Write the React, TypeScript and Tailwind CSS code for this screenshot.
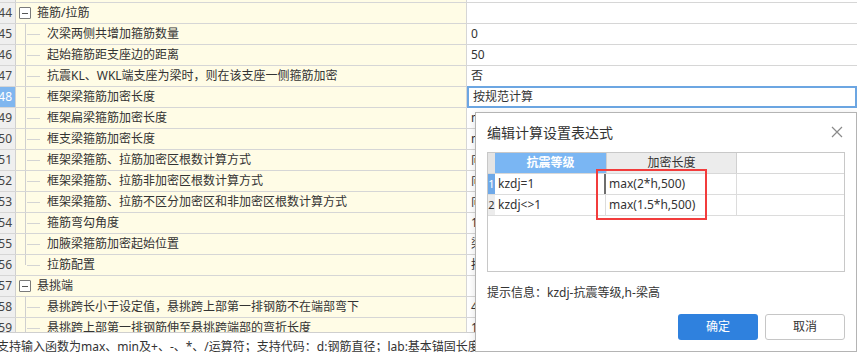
import React from "react";

type Row = {
  n: number;
  kind: "group" | "child";
  name: string;
  value?: string;
  last?: boolean;
  selected?: boolean;
};

const ROWS: Row[] = [
  { n: 43, kind: "child", name: "", value: "", last: true },
  { n: 44, kind: "group", name: "箍筋/拉筋" },
  { n: 45, kind: "child", name: "次梁两侧共增加箍筋数量", value: "0" },
  { n: 46, kind: "child", name: "起始箍筋距支座边的距离", value: "50" },
  { n: 47, kind: "child", name: "抗震KL、WKL端支座为梁时，则在该支座一侧箍筋加密", value: "否" },
  { n: 48, kind: "child", name: "框架梁箍筋加密长度", value: "按规范计算", selected: true },
  { n: 49, kind: "child", name: "框架扁梁箍筋加密长度", value: "max(b+hb,lae,C)" },
  { n: 50, kind: "child", name: "框支梁箍筋加密长度", value: "max(0.2*Ln,1.5*hb)" },
  { n: 51, kind: "child", name: "框架梁箍筋、拉筋加密区根数计算方式", value: "向上取整+1" },
  { n: 52, kind: "child", name: "框架梁箍筋、拉筋非加密区根数计算方式", value: "向上取整-1" },
  { n: 53, kind: "child", name: "框架梁箍筋、拉筋不区分加密区和非加密区根数计算方式", value: "向上取整+1" },
  { n: 54, kind: "child", name: "箍筋弯勾角度", value: "135°" },
  { n: 55, kind: "child", name: "加腋梁箍筋加密起始位置", value: "梁端" },
  { n: 56, kind: "child", name: "拉筋配置", value: "按规范计算", last: true },
  { n: 57, kind: "group", name: "悬挑端" },
  { n: 58, kind: "child", name: "悬挑跨长小于设定值，悬挑跨上部第一排钢筋不在端部弯下", value: "4*h" },
  { n: 59, kind: "child", name: "悬挑跨上部第一排钢筋伸至悬挑跨端部的弯折长度", value: "12*d" },
];

function TreeRow({ row }: { row: Row }) {
  return (
    <div className="flex h-[21px] border-b border-[#d6d6d6]">
      {/* 行号 */}
      <div
        className={
          row.selected
            ? "flex w-[16px] shrink-0 items-center justify-end overflow-hidden border-r border-[#d0d0d0] bg-[#7fb6ef] pr-[3px] text-white"
            : "flex w-[16px] shrink-0 items-center justify-end overflow-hidden border-r border-[#d0d0d0] bg-[#efefef] pr-[3px] text-[#444]"
        }
      >
        {row.n}
      </div>

      {/* 名称 */}
      <div className="relative flex w-[450px] shrink-0 items-center overflow-hidden whitespace-nowrap bg-[#fffce6]">
        {row.kind === "group" ? (
          <>
            <span className="ml-[3px] flex h-[12px] w-[12px] items-center justify-center rounded-[1px] border border-[#7a7a7a] bg-white">
              <span className="h-px w-[6px] bg-[#555]" />
            </span>
            <span className="ml-[6px]">{row.name}</span>
          </>
        ) : (
          <>
            <span
              className={
                row.last
                  ? "absolute left-[9px] top-0 h-[10px] w-px bg-[#cfcfcf]"
                  : "absolute left-[9px] top-0 h-full w-px bg-[#cfcfcf]"
              }
            />
            <span className="absolute left-[11px] top-[10px] h-px w-[13px] bg-[#d4d4d4]" />
            <span className="ml-[31px]">{row.name}</span>
          </>
        )}
      </div>

      {/* 值 */}
      <div className="relative flex flex-1 items-center whitespace-nowrap border-l border-[#d6d6d6] bg-white pl-[4px]">
        {row.selected ? (
          <>
            <span className="absolute inset-x-0 -top-px -bottom-px border-2 border-[#6ca6e2]" />
            <span className="pl-[2px]">{row.value}</span>
          </>
        ) : (
          row.value
        )}
      </div>
    </div>
  );
}

function ExprDialog() {
  return (
    <div className="absolute left-[475px] top-[112px] flex h-[240px] w-[382px] flex-col border border-[#b4b4b4] bg-white px-[11px] shadow-[0_2px_8px_rgba(0,0,0,0.12)]">
      <div className="flex h-[39px] items-center justify-between pb-[1px]">
        <span className="text-[14px] text-[#333]">编辑计算设置表达式</span>
        <svg width="12" height="12" viewBox="0 0 12 12" className="mr-[2px]">
          <path d="M1 1L11 11M11 1L1 11" stroke="#8a8a8a" strokeWidth="1.2" />
        </svg>
      </div>

      {/* 表达式表格 */}
      <div className="relative h-[120px] border border-[#c8c8c8]">
        <div className="flex h-[21px] border-b border-[#d8d8d8]">
          <div className="w-[7px] bg-[#e4e4e4]" />
          <div className="flex w-[111px] items-center justify-center bg-[#7ab6f3] font-bold text-white">
            抗震等级
          </div>
          <div className="flex w-[131px] items-center justify-center border-x border-[#d0d0d0] bg-[#ececec] text-[#333]">
            加密长度
          </div>
        </div>
        <div className="flex h-[21px] border-b border-[#dcdcdc]">
          <div className="flex w-[7px] items-center justify-center overflow-hidden bg-[#6fa9e8] text-[11px] text-white">1</div>
          <div className="flex w-[111px] items-center border-r-2 border-[#6e6e6e] pl-[3px]">kzdj=1</div>
          <div className="flex w-[131px] items-center border-r border-[#dcdcdc] pl-[3px]">max(2*h,500)</div>
        </div>
        <div className="flex h-[21px] border-b border-[#dcdcdc]">
          <div className="flex w-[7px] items-center justify-center overflow-hidden bg-[#ececec] text-[11px] text-[#333]">2</div>
          <div className="flex w-[111px] items-center border-r border-[#dcdcdc] pl-[3px]">kzdj&lt;&gt;1</div>
          <div className="flex w-[131px] items-center border-r border-[#dcdcdc] pl-[3px]">max(1.5*h,500)</div>
        </div>
        {/* 红框标注 */}
        <div className="absolute left-[108px] top-[16px] h-[51px] w-[111px] border-2 border-[#f23c3c]" />
      </div>

      <div className="mt-[11px] leading-[20px] text-[#333]">提示信息：kzdj-抗震等级,h-梁高</div>

      <div className="mt-[11px] flex justify-end gap-[7px]">
        <button className="h-[26px] w-[80px] rounded-[3px] bg-[#2f81de] text-white">确定</button>
        <button className="h-[26px] w-[80px] rounded-[3px] border border-[#c6c6c6] bg-white text-[#333]">
          取消
        </button>
      </div>
    </div>
  );
}

export default function App() {
  return (
    <div className="relative h-[352px] w-[857px] overflow-hidden bg-white font-['Noto_Sans','Noto_Sans_CJK_SC',sans-serif] text-[12px] text-[#333]">
      <div className="h-[332px] overflow-hidden">
        <div className="-mt-[18px]">
          {ROWS.map((r) => (
            <TreeRow key={r.n} row={r} />
          ))}
        </div>
      </div>
      <div className="h-[20px] overflow-hidden whitespace-nowrap border-t border-[#cfcfcf] bg-white pt-[4px] leading-[20px]">
        <span className="-ml-[3px]">
          支持输入函数为max、min及+、-、*、/运算符；支持代码：d:钢筋直径；lab:基本锚固长度；lae:抗震锚固长度
        </span>
      </div>
      <ExprDialog />
    </div>
  );
}
